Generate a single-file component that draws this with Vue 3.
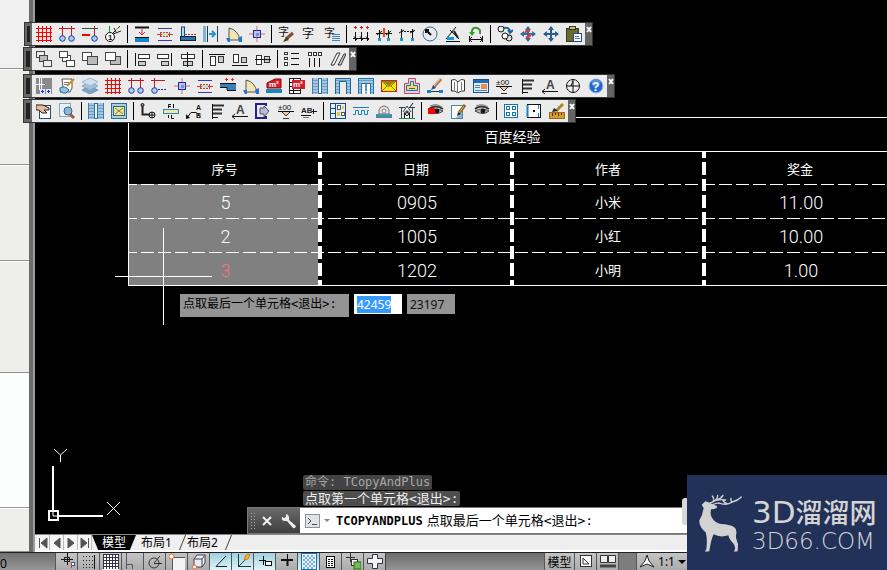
<script setup>
import { onMounted, ref } from 'vue'

const s = (d, c = '#111', w = 1, f = 'none') => `<path d="${d}" stroke="${c}" stroke-width="${w}" fill="${f}"/>`
const f = (d, c) => `<path d="${d}" fill="${c}"/>`
const r = (x, y, w, h, fill, c = 'none') => `<rect x="${x}" y="${y}" width="${w}" height="${h}" fill="${fill}" stroke="${c}"/>`
const o = (x, y, q, fill = 'none', c = '#111') => `<circle cx="${x}" cy="${y}" r="${q}" fill="${fill}" stroke="${c}"/>`
const t = (x, y, size, txt, fill = '#111', weight = 400) =>
  `<text x="${x}" y="${y}" font-size="${size}" fill="${fill}" font-weight="${weight}" font-family="'Liberation Sans','Noto Sans CJK SC',sans-serif">${txt}</text>`

const hatch = r(0, 0, 16, 16, '#a9c4de') + s('M0 2.5H16M0 5.5H16M0 8.5H16M0 11.5H16M0 14.5H16', '#6f9ac2')
const eye = s('M1 6Q7 1 15 6', '#333', 2) + s('M2 3Q8 0 14 4', '#777', 1) + s('M1 8Q8 4 15 8Q9 13 1 8', '#444', 1, '#bbb') + o(9, 8, 2, '#111')
const level = t(0, 7, 8, '±00') + s('M0 8.5H16') + s('M4 9L8 13L12 9M5 15.5H11', '#333', 1, '#e9c9a4')
const stack = s('M3.5 1V16') + s('M4 2.5H15M4 6.5H13M4 10.5H13', '#333', 2) + s('M4 14.5H9')
const arrowA = t(4, 11, 12, 'A', '#444', 700) + s('M0 13.5H16M3 11L0 13.5L3 16')
const pencil = s('M8 10L14 2', '#8a5a1e', 3) + s('M8 10L13 3', '#e8b64a', 1) + f('M6 13L7 9L10 11Z', '#222')
const gridLines = s('M2.5 0V16M6.5 0V16M10.5 0V16M14.5 0V16M0 2.5H16M0 6.5H16M0 10.5H16M0 14.5H16', '#f00', 1)

const icons = {
  grid: gridLines,
  axis: s('M0 2.5H16M3.5 0V10M12.5 0V10', '#c8141e') + o(3.5, 12.5, 2.8, '#a9cdf4', '#2437a0') + o(12.5, 12.5, 2.8, '#a9cdf4', '#2437a0'),
  axisEnd: s('M0 2.5H16', '#0b6b3c') + s('M0 9H8', '#f00', 2) + s('M12.5 0V10', '#c8141e') + o(12.5, 12.5, 2.8, '#a9cdf4', '#2437a0'),
  axisDot: s('M0 2.5H14M3.5 0V10', '#c8141e') + o(3.5, 12.5, 2.8, '#a9cdf4', '#2437a0') + `<path d="M7 11.5H16" stroke="#2437a0" stroke-dasharray="2 1"/>`,
  numAxis: s('M4.5 0V6', '#0a9a30') + o(5, 11, 4.5, '#fff') + t(3, 14, 8, '1', '#111', 700) + s('M8 7L15 0M8 8L16 5M9 2L11 6', '#222') + s('M11 4L15 1', '#d8c51b', 1),
  insert: s('M1 1.5H15', '#111', 2) + s('M8 3V9M5 6L8 9L11 6', '#e02a2a', 1) + r(1, 12, 14, 4, '#1587c4') + s('M1 11.5H15'),
  dashWall: s('M1 2.5H15M1 14.5H15', '#3a3ab0') + r(3, 7, 10, 3, '#bfe3c8') + s('M0 8.5H5M11 8.5H16M3.5 6V11M12.5 6V11', '#d43535') + `<path d="M3 6.5H13M3 10.5H13" stroke="#d43535" stroke-dasharray="2 1"/>`,
  corner: r(1.5, 1, 3, 12, '#b5d8ef', '#194a7a') + r(.5, 10.5, 15, 4, '#2b72ad', '#123') + `<path d="M5 8.5H16" stroke="#b33" stroke-dasharray="2 1"/>`,
  push: r(0, 0, 3, 16, '#79b4d4') + s('M4.5 0V16', '#235') + s('M6 8H12M9 5L12 8L9 11', '#2196dc', 2) + s('M14.5 0V16', '#345'),
  arcDoor: s('M3 14V2Q12 4 14 14Z', '#555', 1, '#efe6b4') + f('M0 12H4V16H2Z', '#2b72c8') + f('M12 12L16 10V16H13Z', '#2b72c8'),
  column: s('M8 0V16M0 8H16', '#d66') + r(4.5, 4.5, 7, 7, '#b9c6ee', '#1c2f90') + r(7, 7, 3, 3, '#7b8cd8'),
  brush: t(0, 10, 11, '字') + s('M8 13L15 7', '#8a4b22', 3) + f('M5 16L8 11L11 14Z', '#442'),
  word: t(1, 12, 12, '字'),
  wordList: t(0, 11, 11, '字') + s('M8 8.5H16M8 10.5H16M8 12.5H16M8 14.5H16', '#3f82c4'),
  dims: s('M2.5 6V15M8.5 6V15M14.5 6V15M0 12.5H16') + s('M1 10.5L4 14M7 10.5L10 14M13 10.5L16 14') + s('M1 1.5H4M2.5 0V3M7 1.5H10M8.5 0V3M13 1.5H16M14.5 0V3', '#e11'),
  dimBreak: s('M0 7.5H16M3.5 4V12M12.5 4V12M1 9L6 5M10 9L15 5') + s('M8 2V11', '#f40', 2) + r(2, 12, 3, 3, '#159bd4') + r(11, 12, 3, 3, '#159bd4'),
  dimGap: `<path d="M2 5.5H15" stroke="#111" stroke-dasharray="2 1"/>` + s('M2.5 3V12M13.5 3V12M0 7L5 4M11 7L16 4') + r(1, 12, 3, 3, '#159bd4') + r(12, 12, 3, 3, '#159bd4'),
  radius: o(8, 8, 7, 'none', '#356a9a') + s('M9 9L4 4M4 7V4H7', '#111', 2),
  angle: s('M1 15.5H15M1 13L11 1M7 6L14 13M5 4L10 9') + r(2, 11, 7, 3, '#159bd4') + s('M9 5L13 12', '#222', 2),
  rotate: s('M4 8Q3 1 9 2Q13 3 12 8', '#3c9a2d', 2) + f('M1 6H7L4 10Z', '#3c9a2d') + s('M1.5 10V16M14.5 10V16M1 13.5H15M4 11L1 13.5L4 16M12 11L15 13.5L12 16'),
  swap: o(4, 3, 3, '#eee') + o(12, 12, 3, '#ddd') + o(8, 10, 3, '#fff') + s('M7 2Q13 1 13 6M11 4L13 7L16 4', '#1d64a8', 2),
  moveRed: s('M8 1V15M1 8H15', '#2b6fa8', 2) + f('M8 0L11 4H5ZM8 16L11 12H5ZM0 8L4 5V11ZM16 8L12 5V11Z', '#2b6fa8') + s('M5 7Q6 4 10 5M11 8Q9 12 6 11', '#e33', 2),
  move: s('M8 1V15M1 8H15', '#2b5f98', 2) + f('M8 0L11 4H5ZM8 16L11 12H5ZM0 8L4 5V11ZM16 8L12 5V11Z', '#2b5f98'),
  paste: r(.5, 2.5, 12, 13, '#6b6b2c', '#333') + r(3.5, .5, 6, 3, '#d3c34a', '#333') + r(7.5, 7.5, 8, 8, '#fff', '#26429a') + s('M9 10.5H13M9 12.5H14', '#4b6fd0'),
  layA: r(.5, .5, 8, 6, '#eee', '#444') + r(3.5, 4.5, 8, 6, '#bbb', '#444') + r(7.5, 9.5, 8, 6, '#eee', '#444'),
  layB: r(3.5, 4.5, 8, 6, '#fff', '#444') + r(.5, .5, 8, 6, '#fff', '#444') + r(7.5, 9.5, 8, 6, '#fff', '#444'),
  layC: r(.5, 1.5, 9, 8, '#fff', '#444') + r(5.5, 5.5, 10, 8, '#bbb', '#444'),
  layD: r(5.5, 5.5, 10, 8, '#bbb', '#444') + r(.5, 1.5, 10, 8, '#fff', '#444'),
  alLeft: s('M1.5 2V15') + r(4.5, 3.5, 11, 4, '#fff', '#333') + r(4.5, 10.5, 7, 4, '#ccc', '#333'),
  alRight: s('M14.5 2V15') + r(.5, 3.5, 11, 4, '#fff', '#333') + r(4.5, 10.5, 7, 4, '#ccc', '#333'),
  alMid: r(1.5, 3.5, 13, 4, '#fff', '#333') + r(3.5, 10.5, 9, 4, '#ccc', '#333') + s('M7.5 1V16'),
  alTop: s('M0 3.5H16') + r(1.5, 5.5, 5, 9, '#fff', '#333') + r(9.5, 5.5, 5, 6, '#ccc', '#333'),
  alBot: s('M0 14.5H16') + r(1.5, 3.5, 5, 8, '#fff', '#333') + r(9.5, 6.5, 5, 5, '#ccc', '#333'),
  alCen: r(1.5, 4.5, 5, 9, '#fff', '#333') + r(9.5, 5.5, 5, 6, '#ccc', '#333') + s('M0 8.5H16'),
  rowsList: r(.5, 1.5, 3, 2, '#fff', '#333') + r(.5, 6.5, 3, 2, '#fff', '#333') + r(.5, 11.5, 3, 3, '#fff', '#333') + s('M7 2.5H15M7 7.5H15M7 13.5H15'),
  colsList: r(1.5, 1.5, 3, 3, '#fff', '#333') + r(6.5, 1.5, 3, 3, '#fff', '#333') + r(11.5, 1.5, 3, 3, '#fff', '#333') + s('M2.5 7V16M7.5 7V16M12.5 7V16'),
  slashes: s('M1 14L7 2H10L4 14Z', '#333', 1, '#fff') + s('M8 14L14 3H16L11 14Z', '#333', 1, '#ccc'),
  plan: r(0, 0, 16, 16, '#8a8a8a') + s('M0 6.5H9M5.5 0V14M3.5 0V12', '#fff') + r(4, 11, 5, 5, '#dfe6ff') + r(10, 11, 5, 5, '#dfe6ff') + s('M5 13.5H8M6.5 12V15M11 13.5H14M12.5 12V15', '#22f'),
  editDoc: s('M3 1H13V10L11 14H1L4 9Z', '#555', 1, '#fff') + s('M5 4.5H10M5 6.5H9', '#777') + s('M1 10Q6 7 10 12L7 15Q4 16 1 13Z', '#2a6b94', 1, '#8fc4df') + s('M8 8L15 1', '#d08a24', 2),
  layers: s('M0 12L8 8L16 12L8 16Z', '#6d93b8', 1, '#7fa3c4') + s('M0 8L8 4L16 8L8 12Z', '#86a8c6', 1, '#a5c0d8') + s('M0 4L8 0L16 4L8 8Z', '#9ab8d2', 1, '#d2e1ee'),
  beam: f('M0 5H16V12H7V9H0Z', '#3c7fb8') + s('M0 5.5H16M7 12.5H16M0 9.5H7V12') + s('M5 1.5H8M6.5 0V3M11 1.5H14M12.5 0V3', '#e22'),
  area: s('M1 10V5L9 1H15V10Z', '#900', 1, '#d5202a') + t(3, 9, 8, 'm²', '#fff', 700) + r(0, 11, 16, 4, '#1f86bd'),
  areaTbl: r(.5, .5, 11, 15, '#fff', '#222') + s('M0 4.5H12M4.5 0V16M0 8.5H12M0 12.5H12') + r(3, 2, 13, 9, '#d5202a') + t(4, 9, 8, 'm²', '#fff', 700),
  window: hatch + r(6.5, 0.5, 3, 15, '#eef6fb', '#1b7ba6') + s('M.5 0V16M15.5 0V16', '#3d7eac'),
  doorway: hatch + f('M5 4H11V16H5Z', '#ebebeb') + s('M4.5 16V3.5H11.5V16', '#176b9b') + s('M.5 16V.5H15.5V16', '#176b9b'),
  doorway2: hatch + f('M4 6H7V16H4ZM9 6H12V16H9Z', '#fff') + s('M3.5 16V5.5H12.5V16M8 5V13', '#1479ae') + s('M.5 16V.5H15.5V16', '#1479ae'),
  roof: r(.5, 2.5, 15, 11, '#f4e50a', '#c22') + f('M1 3L8 8L15 3Z', '#8f8410') + s('M1 3L6 8L1 13M15 3L10 8L15 13M6 8H10', '#8f7a10'),
  outline: s('M4.5 .5H11.5V5.5H15.5V15.5H.5V5.5H4.5Z', '#e0404a', 1, '#bfe0f4') + s('M6.5 3.5H9.5V7.5H13.5V12.5H2.5V7.5H6.5Z', '#2b68b4', 1, '#f2dd62') + s('M5 10.5H11', '#2b68b4'),
  drawLine: s('M1 13.5H15', '#333') + r(0, 12, 4, 3, '#1b7fd0') + r(12, 12, 4, 3, '#1b7fd0') + s('M7 9L14 1', '#b3764e', 3) + s('M7 8L13 1', '#e8d0c0', 1) + f('M4 12L6 7L9 10Z', '#357'),
  book: s('M8 4Q5 0 1.5 2V13Q5 12 8 15Q11 12 14.5 13V2Q11 0 8 4Z', '#333', 1, '#fff') + s('M7.5 4V15M4.5 4V12M11.5 4V12', '#777'),
  panel: r(.5, 1.5, 15, 13, '#d8edf8', '#1b4f86') + r(1, 2, 14, 3, '#226cb4') + r(8, 6, 6, 5, '#f08a4c') + s('M2 7.5H7M2 9.5H7M2 12.5H14', '#4a88b8'),
  level,
  stack,
  arrowA,
  compass: o(8, 8, 6.5, '#eee') + s('M8 1V15M1 8H15M8 3L6 8', '#111', 1),
  help: o(8, 8, 7, '#2467cc', '#9cc0ea') + o(8, 5, 4, '#4f90e4', 'none') + t(4, 13, 12, '?', '#fff', 700),
  handDoc: r(3.5, 2.5, 11, 13, '#fff', '#205068') + s('M0 2H7L13 5V7L8 7L11 10H6L3 7H0Z', '#222', 1, '#e7bd9d'),
  search: r(.5, .5, 11, 13, '#e8f0fa', '#8aa') + s('M11 11L15 15', '#a45b2c', 3) + o(9, 8, 4, '#8db8de', '#3b5f8a'),
  sheet: r(.5, .5, 15, 15, '#a9d0e0', '#2b6f98') + r(2.5, 3.5, 11, 9, '#f1e783', '#33648a') + s('M4 5L12 11M12 5L4 11', '#777'),
  pipe: s('M2.5 2V11.5H10', '#222', 2) + o(2.5, 2, 1.5, '#999') + o(12, 12, 3, '#eee') + s('M12 9V15M9 12H15'),
  cutL: r(.5, 6.5, 15, 4, '#f0e6a8', '#3089b4') + s('M8 1.5H5.5V5M10.5 1V5M8.5 12V15.5H11') + s('M5 3.5H8M5.5 12V15'),
  leadAB: s('M1 15L5 9.5H10L13 12') + f('M0 16V11L4 15Z', '#111') + t(10, 7, 7, 'A', '#111', 700) + t(10, 15, 7, 'B', '#111', 700),
  exportBox: s('M11 3V1H1V15H11V13', '#26228a', 2, '#e8e8fa') + s('M5 5V11H9V14L14 8L9 3V5Z', '#555', 1, '#bdb9d8'),
  abc: t(0, 10, 8, 'AB', '#222', 700) + s('M0 12.5H10M11 8.5H16M12.5 6V11') + s('M2 14.5H8', '#777'),
  cabinet: r(.5, .5, 15, 15, '#e4eef8', '#174a80') + s('M5.5 0V16M0 5.5H5M0 10.5H5', '#174a80') + r(7.5, 2.5, 3, 4, '#fff', '#556') + r(12, 3, 2, 3, '#eacb36') + r(7, 9, 3, 4, '#eacb36') + r(11.5, 9.5, 3, 3, '#fff', '#556'),
  teeth: s('M0 4.5H16M0 11.5H2.5V7.5H5.5V11.5H8.5V7.5H11.5V11.5H14.5V7.5H16', '#1780c4', 1),
  lamp: s('M3 11V7Q4 3 8 3Q12 3 13 7V11Z', '#777', 1, '#e5e5e5') + o(8, 8, 2, '#fff', '#888') + r(0, 11, 16, 3, '#3c93b4') + s('M0 14.5H16', '#777'),
  house: s('M0 4.5H6M10 4.5H16M2.5 5V15M13.5 5V15M4 9L8 3L12 9', '#245') + s('M5.5 15V10Q8 6 10.5 10V15', '#111', 1, '#fff') + o(8, 11, 1.5, '#fff') + s('M0 15.5H16', '#2a8a3a') + s('M11 4L14 0'),
  eyeRed: eye + r(0, 5, 7, 6, '#f00'),
  note: r(.5, 2.5, 11, 13, '#fff', '#48a') + f('M5 15H11V9Z', '#8fb4e0') + pencil,
  eye,
  quad: r(1.5, 1.5, 13, 13, '#fff', '#1575a8') + r(3.5, 3.5, 3, 3, '#fff', '#1575a8') + r(9.5, 3.5, 3, 3, '#fff', '#1575a8') + r(3.5, 9.5, 3, 3, '#fff', '#1575a8') + r(9.5, 9.5, 3, 3, '#fff', '#1575a8'),
  frame: r(1.5, 1.5, 13, 13, '#fff', '#111') + s('M1.5 2V14', '#1785c4', 2) + s('M12.5 2V6M12.5 10V14', '#1785c4') + r(7, 7, 2, 2, '#111'),
  ruler: r(.5, 9.5, 15, 6, '#d99b2b', '#9c6c20') + s('M3.5 10V13M6.5 10V12M9.5 10V13M12.5 10V12', '#432') + s('M7 8L14 1', '#b08a1c', 3) + f('M3 9L5 5L9 8Z', '#222')
}

const docks = [
  [
    { name: '轴网', groups: ['grid axis axisEnd numAxis', 'insert dashWall corner push arcDoor column', 'brush word wordList', 'dims dimBreak dimGap radius angle rotate', 'swap moveRed move paste'], inset: true },
    { name: '对齐', groups: ['layA layB layC layD', 'alLeft alRight alMid', 'alTop alBot alCen', 'rowsList colsList slashes'] }
  ],
  [
    { name: '常用', groups: ['plan editDoc layers grid axis axisDot column dashWall beam arcDoor area areaTbl window doorway doorway2 roof outline drawLine book panel level stack arrowA compass help'] },
    { name: '图块', groups: ['handDoc search', 'window sheet', 'pipe cutL leadAB stack arrowA exportBox level abc', 'cabinet teeth lamp house', 'eyeRed note eye', 'quad frame ruler'] }
  ]
].map(d => d.map(b => ({ ...b, groups: b.groups.map(g => g.split(' ')) })))

const heads = ['序号', '日期', '作者', '奖金']
const rows = [
  ['5', '0905', '小米', '11.00'],
  ['2', '1005', '小红', '10.00'],
  ['3', '1202', '小明', '1.00']
]

const nav = [
  { name: '首页', d: 'M3.5 2V12M11 2V12L5 7Z' },
  { name: '上一页', d: 'M10 2V12L4 7Z' },
  { name: '下一页', d: 'M4 2V12L10 7Z' },
  { name: '末页', d: 'M10.5 2V12M3 2V12L9 7Z' }
]

const toggles = [
  { name: '推断约束', svg: s('M8.5 0V12M2 6.5H14') + r(5.5, 4.5, 5, 4, 'none', '#223') + r(12.5, 9.5, 3, 3, '#fff', '#1b5fb0') + s('M12.5 9V15', '#d33') },
  { name: '捕捉', svg: `<path d="M2 3.5H12M2 7.5H12M2 11.5H12M2 14.5H12" stroke="#222" stroke-dasharray="1 2"/>` + s('M13.5 2V16') },
  { name: '栅格', svg: r(0, 1, 16, 16, '#fff') + s('M.5 1V16M3.5 1V16M6.5 1V16M9.5 1V16M12.5 1V16M15.5 1V16M0 1.5H16M0 4.5H16M0 7.5H16M0 10.5H16M0 13.5H16', '#334') },
  { name: '正交', svg: s('M1.5 0V16M1.5 11.5H7.5V16', '#556') },
  { name: '极轴', svg: o(7, 10, 5, 'none', '#333') + s('M7 10L13 3M7 10.5H15', '#333') },
  { name: '对象捕捉', svg: r(3.5, 4.5, 13, 13, '#f4f4f4', '#556') + o(2.5, 3.5, 2.5, '#fff', '#f26a1b') },
  { name: '三维捕捉', svg: s('M3 6L6 2H14V10L11 14H3Z', '#445', 1, '#e8eef4') + s('M3 6H11V14M11 6L14 2', '#445') + o(3.5, 14, 2, '#fff', '#f26a1b') },
  { name: '对象追踪', on: true, svg: s('M13 3L3 13.5H14', '#222') },
  { name: '动态UCS', on: true, svg: s('M3.5 1V13.5H16M3 14L12 5', '#234') + s('M9 7L11 2L15 1L13 6Z', '#e07a10', 1, '#f7b23a') },
  { name: '动态输入', on: true, svg: s('M6.5 3V12M2 7.5H9', '#111') + r(8.5, 8.5, 6, 4, '#fff', '#111') },
  { name: '线宽', svg: s('M8.5 1V8') + s('M2 7H14M8.5 7V13', '#111', 2) },
  { name: '透明度', on: true, svg: r(.5, .5, 15, 16, '#e8f4fc', '#1b6fb8') + `<path d="M2 3H14M2 7H14M2 11H14M2 15H14" stroke="#78aede" stroke-width="2" stroke-dasharray="2 2"/><path d="M4 5H14M4 9H14M4 13H14" stroke="#78aede" stroke-width="2" stroke-dasharray="2 2"/>` },
  { name: '快捷特性', svg: r(3.5, 3.5, 8, 11, '#fff', '#111') + s('M5 6.5H7M8 6.5H10M5 8.5H7M8 8.5H10M5 10.5H7M8 10.5H10M5 12.5H7M8 12.5H10') },
  { name: '选择循环', svg: s('M5.5 0V9M1 4.5H10', '#333') + r(6.5, 6.5, 6, 6, '#fff', '#333') + r(9, 9, 7, 7, '#6cbf4b', '#2c6a1b') },
  { name: '注释监视器', svg: s('M5.5 1.5H10.5V5.5H15.5V10.5H10.5V15.5H5.5V10.5H.5V5.5H5.5Z', '#334', 1, '#f4f4f4') }
]

const x = ref('42459')
const y = ref('23197')
const xBox = ref(null)
onMounted(() => {
  xBox.value.focus({ preventScroll: true })
  xBox.value.select()
})
</script>

<template>
  <div class="app">
    <div class="main">
      <aside class="palette">
        <div class="pane head"></div>
        <div class="pane upper"></div>
        <div class="pane middle"></div>
        <div class="pane lower"></div>
        <div class="pane list"></div>
        <div class="pane foot"></div>
      </aside>

      <section class="workspace">
        <div class="canvas">
          <table class="sheet">
            <colgroup><col class="first"><col><col><col></colgroup>
            <thead>
              <tr class="title"><th colspan="4">百度经验</th></tr>
              <tr class="heads"><th v-for="h in heads" :key="h">{{ h }}</th></tr>
            </thead>
            <tbody>
              <tr v-for="(row, i) in rows" :key="i" :class="{ last: i === rows.length - 1 }">
                <td v-for="(cell, j) in row" :key="j" :class="{ picked: j === 0, word: j === 2 }">{{ cell }}</td>
              </tr>
            </tbody>
          </table>

          <div class="cross-h"></div>
          <div class="cross-v"></div>

          <div class="prompt">
            <label class="prompt-text" for="coord-x">点取最后一个单元格&lt;退出&gt;:</label>
            <input id="coord-x" ref="xBox" v-model="x" class="coord active">
            <input v-model="y" class="coord" aria-label="Y">
          </div>

          <svg class="ucs" viewBox="0 0 80 80" aria-hidden="true">
            <g fill="none" stroke="#fff">
              <path d="M8 20V66M14 70H58" stroke-width="2" />
              <rect x="4" y="65" width="9" height="9" stroke-width="2" />
              <path d="M8 66V70H13" stroke-width="1" />
              <path d="M9 3L15.500 9L22 3M15.500 9V16M62 56L75 69M75 56L62 69" />
            </g>
          </svg>

          <div class="history">
            <span class="old">命令: TCopyAndPlus</span>
            <span>点取第一个单元格&lt;退出&gt;:</span>
          </div>
          <div class="command">
            <div class="grip">
              <i class="dots"></i>
              <button type="button" aria-label="关闭">
                <svg width="12" height="12" viewBox="0 0 12 12"><path d="M2 2L10 10M10 2L2 10" stroke="#f2f2f2" stroke-width="2" /></svg>
              </button>
              <button type="button" aria-label="自定义">
                <svg width="16" height="16" viewBox="0 0 16 16"><path d="M5 1L5 4L3 5L1 4Q0 8 4 8L6 8L12 15Q14 16 15 13L8 7Q9 2 5 1Z" fill="#eee" /></svg>
              </button>
            </div>
            <div class="line">
              <svg width="15" height="14" viewBox="0 0 15 14"><rect x=".5" y=".5" width="14" height="13" fill="#dfe3e8" stroke="#8b949e" /><path d="M3 4L6 7L3 10M7 10.500H12" fill="none" stroke="#444" /></svg>
              <i class="caret"></i>
              <b>TCOPYANDPLUS</b>
              <span>点取最后一个单元格&lt;退出&gt;:</span>
            </div>
          </div>
        </div>

        <nav class="tabs">
          <button v-for="n in nav" :key="n.name" type="button" class="nav" :aria-label="n.name">
            <svg width="14" height="14" viewBox="0 0 14 14"><path :d="n.d" fill="#555" stroke="#555" /></svg>
          </button>
          <button type="button" class="tab current">模型</button>
          <button type="button" class="tab">布局1</button>
          <button type="button" class="tab">布局2</button>
        </nav>
      </section>
    </div>

    <footer class="status">
      <div class="readout">0</div>
      <button v-for="g in toggles" :key="g.name" type="button" class="toggle" :class="{ on: g.on }" :aria-label="g.name">
        <svg width="16" height="17" viewBox="0 0 16 17" v-html="g.svg"></svg>
      </button>
      <div class="spacer"></div>
      <button type="button" class="toggle space">模型</button>
      <button type="button" class="toggle" aria-label="布局"><svg width="16" height="17" viewBox="0 0 16 17"><rect x="2.500" y="2.500" width="11" height="11" fill="#fff" stroke="#333" /><path d="M5 5V11H11Z" fill="none" stroke="#333" /></svg></button>
      <button type="button" class="toggle" aria-label="快速查看"><svg width="16" height="17" viewBox="0 0 16 17"><path d="M.5 2.500H7.500V9.500H.5ZM8.500 2.500H15.500V9.500H8.500Z" fill="#eee" stroke="#333" /><path d="M0 13H16" stroke="#444" stroke-width="3" /></svg></button>
      <div class="gap"></div>
      <button type="button" class="toggle scale">
        <svg width="16" height="17" viewBox="0 0 16 17"><path d="M8 2L10 8L15 14L8 11L1 14L6 8Z" fill="#fff" stroke="#222" /></svg>
        1:1<i class="down"></i>
      </button>
      <div class="tail"></div>
    </footer>

    <div class="docks">
      <div v-for="(dock, i) in docks" :key="i" class="dock">
        <div v-for="bar in dock" :key="bar.name" class="bar" :class="{ inset: bar.inset }" role="toolbar" :aria-label="bar.name">
          <i class="handle"></i>
          <div v-for="(group, k) in bar.groups" :key="k" class="group">
            <button v-for="name in group" :key="name" type="button" :aria-label="name">
              <svg width="16" height="16" viewBox="0 0 16 16" v-html="icons[name]"></svg>
            </button>
          </div>
          <button type="button" class="close" aria-label="关闭">
            <svg width="6" height="7" viewBox="0 0 6 7"><path d="M1 1L5 6M5 1L1 6" stroke="#fff" stroke-width="2" /></svg>
          </button>
        </div>
      </div>
    </div>

    <div class="brand">
      <svg width="47" height="62" viewBox="55 80 141 186" aria-hidden="true">
        <path fill="#d2d2d2" d="M66 118L77 108L86 111L98 117L112 122L111 128L101 132L95 131Q90 142 96 156Q105 173 124 176Q150 177 163 185Q172 191 170 205Q167 214 171 224L175 236L174 258L163 259L166 251Q167 239 155 228Q147 219 146 210Q122 218 102 207Q94 222 89 258L76 259L80 251Q84 222 78 201Q58 184 59 165Q69 150 72 128Z" />
        <path fill="none" stroke="#d2d2d2" stroke-width="4" stroke-linecap="round" d="M91 113Q110 108 98 92M102 108Q114 102 114 90M110 104Q124 100 130 90M96 112Q112 100 138 104M118 113Q142 122 158 110Q174 106 185 95M142 115Q132 112 130 104M158 110Q152 106 154 99M100 118Q112 110 128 116" />
      </svg>
      <div class="brand-text">
        <div class="brand-name"><span>3D</span>溜溜网</div>
        <div class="brand-site">3D66.COM</div>
      </div>
    </div>
  </div>
</template>

<style>
body { background: #000; overflow: hidden; }
</style>

<style scoped>
.app {
  position: relative;
  display: flex;
  flex-direction: column;
  height: 100vh;
  overflow: hidden;
  background: #000;
  font: 12px/16px "Noto Sans", "Noto Sans CJK SC", sans-serif;
}
button {
  display: flex;
  align-items: center;
  justify-content: center;
  margin: 0;
  padding: 0;
  border: 0;
  background: none;
  font: inherit;
  color: inherit;
  flex: none;
}
svg { display: block; flex: none; }
.main { flex: 1; min-height: 0; display: flex; }

.palette {
  flex: none;
  width: 29px;
  display: flex;
  flex-direction: column;
  border-right: 4px solid #6b6d6c;
  box-shadow: 2px 0 #9a9c9b;
  margin-right: 2px;
  background: #eeeeea;
}
.pane { box-sizing: border-box; border-bottom: 1px solid #8f9091; box-shadow: 0 1px #fff; }
.head { flex: 69 0 0; background: #f0f0f0; }
.upper { flex: 96 0 0; }
.middle { flex: 96 0 0; }
.lower { flex: 112 0 0; }
.list { flex: 136 0 0; background: #fafffe; border-color: #999; }
.foot { flex: 43 0 0; }

.workspace { flex: 1; min-width: 0; display: flex; flex-direction: column; }
.canvas {
  position: relative;
  flex: 1;
  min-height: 0;
  overflow: hidden;
  background: #000;
  color: #fff;
  padding: 117px 0 0 93px;
}

.sheet {
  table-layout: fixed;
  width: 768px;
  border-spacing: 0;
  border: 1px solid #fff;
  border-right: 0;
  font: 18px/20px Roboto, "Noto Sans CJK SC", sans-serif;
}
.sheet col { width: 192px; }
.sheet col.first { width: 191px; }
.sheet tr { height: 34px; }
.sheet tr.title { height: 33px; }
.sheet tr.heads, .sheet tr.last { height: 33px; }
.sheet th, .sheet td { padding: 4px 0 0 2px; font-weight: 300; text-align: center; }
.sheet .title th { font-size: 14px; padding: 4px 0 0; font-weight: 400; }
.sheet .heads th, .sheet .word { font-size: 13px; font-weight: 400; padding-left: 0; }
.sheet .heads { background: linear-gradient(#fff, #fff) 0 0 / 100% 1px no-repeat; }
.sheet tbody tr { background: linear-gradient(90deg, #fff 13px, #000 13px) -5px 0 / 17px 1px repeat-x; }
.heads th, .sheet td {
  background:
    linear-gradient(#fff 13px, #000 13px) 0 -6px / 2px 17px repeat-y,
    linear-gradient(#fff 13px, #000 13px) 100% -6px / 2px 17px repeat-y;
}
.heads th:first-child { background: linear-gradient(#fff 13px, #000 13px) 100% -6px / 2px 17px repeat-y; }
.heads th:last-child, .sheet td:last-child { background: linear-gradient(#fff 13px, #000 13px) 0 -6px / 2px 17px repeat-y; }
.sheet td.picked {
  background:
    linear-gradient(#fff 13px, #000 13px) 100% -6px / 2px 17px repeat-y,
    linear-gradient(90deg, #fff 13px, #808080 13px) -5px 0 / 17px 1px repeat-x,
    #808080;
}
.last .picked { color: #ff7474; }

.cross-h { position: absolute; left: 80px; top: 276px; width: 97px; height: 1px; background: #fff; }
.cross-v { position: absolute; left: 128px; top: 228px; width: 1px; height: 97px; background: #fff; }

.prompt { position: absolute; left: 145px; top: 294px; display: flex; align-items: flex-start; gap: 5px; }
.prompt-text {
  box-sizing: border-box;
  width: 169px;
  height: 23px;
  padding: 2px 3px;
  background: #949494;
  color: #000;
  font-family: "DejaVu Sans Mono", "Noto Sans CJK SC", monospace;
  white-space: nowrap;
}
.coord {
  box-sizing: border-box;
  width: 48px;
  height: 20px;
  margin: 0;
  padding: 0 3px;
  border: 0;
  outline: 0;
  background: #949494;
  color: #111;
  font: inherit;
}
.coord.active { background: #fff; }
.coord::selection { background: #3399ff; color: #fff; }

.ucs { position: absolute; left: 10px; bottom: 8px; width: 80px; height: 80px; }

.history { position: absolute; left: 268px; bottom: 28px; display: flex; flex-direction: column; align-items: flex-start; gap: 1px; }
.history span {
  padding: 0 2px;
  height: 15px;
  line-height: 15px;
  border-radius: 2px;
  background: #4e4e4e;
  color: #eee;
  font-family: "DejaVu Sans Mono", "Noto Sans CJK SC", monospace;
  font-size: 13px;
}
.history .old { color: #a8a8a8; background: #434343; font-size: 12px; }
.command {
  position: absolute;
  left: 212px;
  right: 0;
  bottom: 0;
  height: 27px;
  box-sizing: border-box;
  border: 1px solid #777;
  display: flex;
}
.grip { flex: none; width: 52px; display: flex; align-items: center; gap: 5px; padding-left: 2px; box-sizing: border-box; background: linear-gradient(#6a6a6a, #3e3e3e); }
.grip .dots { width: 6px; height: 17px; background: radial-gradient(#aaa 1px, transparent 1px) 0 0 / 3px 3px; }
.grip button + button { margin-left: 3px; }
.line {
  flex: 1;
  min-width: 0;
  display: flex;
  align-items: center;
  gap: 4px;
  padding-left: 5px;
  background: #fff;
  color: #000;
  white-space: nowrap;
}
.line b { margin-left: 2px; font-family: "DejaVu Sans Mono", monospace; font-size: 12px; }
.line span { font-size: 13px; font-family: "DejaVu Sans Mono", "Noto Sans CJK SC", monospace; }
.caret { border: 3px solid transparent; border-top-color: #888; border-bottom: 0; }

.tabs { flex: none; display: flex; height: 15px; padding: 0 0 0 1px; border-top: 1px solid #888; border-bottom: 2px solid #fff; background: #efeff0; color: #000; }
.nav { width: 14px; border-right: 1px solid #bbb; box-sizing: border-box; background: #f6f6f6; }
.tab { position: relative; width: 46px; box-sizing: border-box; padding-left: 5px; justify-content: flex-start; white-space: nowrap; }
.tab::after { content: ""; position: absolute; right: -1px; top: 0; bottom: 0; width: 1px; background: #444; transform: skewX(-22deg); }
.tab.current { width: 44px; padding: 0; justify-content: center; background: #000; color: #fff; clip-path: polygon(0 0, 100% 0, 86% 100%, 14% 100%); }
.tab.current::after { display: none; }

.status { flex: none; display: flex; box-sizing: border-box; height: 18px; border-top: 1px solid #222; background: #858585; color: #000; overflow: hidden; }
.readout { width: 55px; flex: none; padding-top: 3px; box-sizing: border-box; background: linear-gradient(#707070, #969696); }
.toggle { width: 22px; box-sizing: border-box; border-left: 1px solid #555; background: linear-gradient(#c4c4c4, #acacac); white-space: nowrap; }
.toggle.on { background: linear-gradient(#9fd0e0, #dff4fa); }
.spacer { flex: 1; border-left: 1px solid #444; background: linear-gradient(#6c6c6c, #949494); }
.space { width: 30px; padding-top: 2px; }
.gap { width: 18px; flex: none; border-left: 1px solid #555; box-sizing: border-box; background: #7d7d7d; }
.scale { width: 52px; gap: 3px; }
.down { border: 4px solid transparent; border-top-color: #000; border-bottom: 0; }
.tail { width: 199px; flex: none; }

.docks { position: absolute; left: 23px; top: 22px; display: flex; flex-direction: column; align-items: flex-start; gap: 3px; }
.dock { display: flex; flex-direction: column; align-items: flex-start; gap: 1px; }
.bar { display: flex; box-sizing: border-box; height: 24px; border: 1px solid #333; background: #ebebeb; }
.bar.inset { margin-left: 1px; }
.bar.inset .handle { width: 7px; }
.handle { width: 8px; background: radial-gradient(#222 1px, transparent 1px) 1px 3px / 2px 3px content-box, #686868; padding: 3px 2px; box-sizing: border-box; background-clip: content-box, border-box; }
.group { display: flex; }
.group button { width: 23px; }
.group + .group { border-left: 1px solid #000; margin: 2px 0 2px 3px; padding-left: 2px; }
.close { width: 7px; align-items: flex-start; padding-top: 3px; background: #646464; }

.brand {
  position: absolute;
  right: 0;
  bottom: 0;
  display: flex;
  gap: 7px;
  box-sizing: border-box;
  width: 200px;
  height: 95px;
  padding: 17px 8px 0 11px;
  background: #223158;
  color: #d4d4d4;
}
.brand::before { content: ""; position: absolute; left: -5px; top: 23px; width: 5px; height: 27px; border-radius: 3px 0 0 3px; background: #d8d8d8; }
.brand-text { white-space: nowrap; }
.brand-name { height: 37px; line-height: 40px; font-size: 27px; font-weight: 500; font-family: "Noto Sans CJK SC", sans-serif; }
.brand-name span { font: 31px/40px "DejaVu Sans", sans-serif; }
.brand-site { font: 200 23px/24px "DejaVu Sans", sans-serif; }
</style>
